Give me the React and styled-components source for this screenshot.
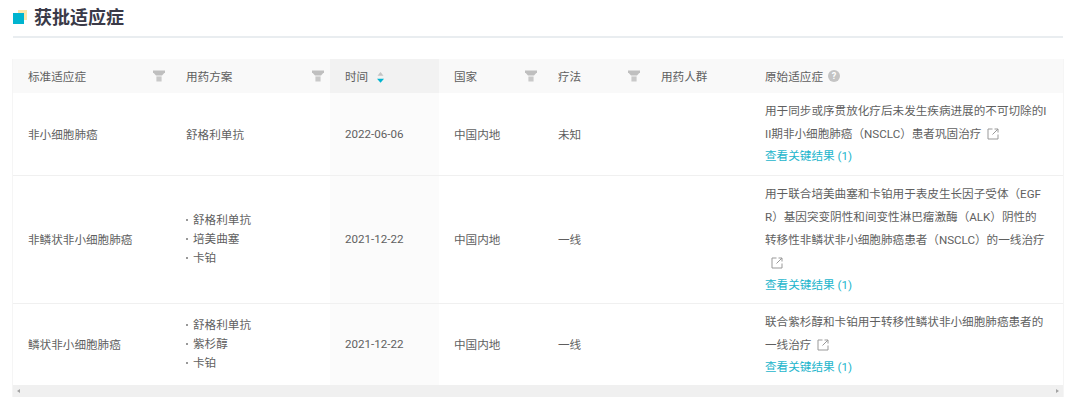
import styled, { createGlobalStyle } from "styled-components";

const columns = [
  { key: "standard", label: "标准适应症", width: 158, filter: true },
  { key: "plan", label: "用药方案", width: 159, filter: true },
  { key: "date", label: "时间", width: 109, sorted: true },
  { key: "country", label: "国家", width: 104, filter: true },
  { key: "therapy", label: "疗法", width: 103, filter: true },
  { key: "people", label: "用药人群", width: 104 },
  { key: "origin", label: "原始适应症", width: 313, help: true },
];

const rows = [
  {
    standard: "非小细胞肺癌",
    plan: ["舒格利单抗"],
    date: "2022-06-06",
    country: "中国内地",
    therapy: "未知",
    origin: "用于同步或序贯放化疗后未发生疾病进展的不可切除的III期非小细胞肺癌（NSCLC）患者巩固治疗",
    height: 82,
  },
  {
    standard: "非鳞状非小细胞肺癌",
    plan: ["舒格利单抗", "培美曲塞", "卡铂"],
    date: "2021-12-22",
    country: "中国内地",
    therapy: "一线",
    origin: "用于联合培美曲塞和卡铂用于表皮生长因子受体（EGFR）基因突变阴性和间变性淋巴瘤激酶（ALK）阴性的转移性非鳞状非小细胞肺癌患者（NSCLC）的一线治疗",
    height: 128,
  },
  {
    standard: "鳞状非小细胞肺癌",
    plan: ["舒格利单抗", "紫杉醇", "卡铂"],
    date: "2021-12-22",
    country: "中国内地",
    therapy: "一线",
    origin: "联合紫杉醇和卡铂用于转移性鳞状非小细胞肺癌患者的一线治疗",
    height: 82,
  },
];

const FilterIcon = () => (
  <FilterSvg viewBox="0 0 12 12" aria-hidden="true">
    <path d="M0 0.5h12v1.8l-3 3.2h-6l-3-3.2z" fill="#bfbfbf" />
    <path d="M3.4 6.4h5.2v5.1h-5.2z" fill="#c9c9c9" />
  </FilterSvg>
);

const SortIcon = () => (
  <SortSvg viewBox="0 0 7 11" aria-hidden="true">
    <path d="M3.5 0l3 3.8h-6z" fill="#c4c4c4" />
    <path d="M0 6.8h7l-3.5 4z" fill="#00b4cf" />
  </SortSvg>
);

const LinkIcon = () => (
  <LinkSvg viewBox="0 0 12 12" aria-hidden="true">
    <path d="M5.5 1h-4.5v10h10v-4.5" />
    <path d="M7.5 1h3.5v3.5M11 1l-5.5 5.5" />
  </LinkSvg>
);

const App = () => (
  <Page>
    <GlobalStyle />
    <TitleBar>
      <TitleIcon viewBox="0 0 14 14" aria-hidden="true">
        <rect x="5" y="0" width="9" height="10" fill="#fde6aa" />
        <rect x="0" y="3" width="11" height="11" fill="#00b4cf" />
      </TitleIcon>
      <Title>获批适应症</Title>
    </TitleBar>

    <TableWrap>
      <Table>
        <colgroup>
          {columns.map((col) => (
            <col key={col.key} width={col.width} />
          ))}
        </colgroup>
        <thead>
          <tr>
            {columns.map((col) => (
              <HeadCell key={col.key} $sorted={col.sorted}>
                <HeadInner>
                  <span>{col.label}</span>
                  {col.sorted && <SortIcon />}
                  {col.help && <HelpMark>?</HelpMark>}
                  {col.filter && <FilterIcon />}
                </HeadInner>
              </HeadCell>
            ))}
          </tr>
        </thead>
        <tbody>
          {rows.map((row) => (
            <BodyRow key={row.standard} $height={row.height}>
              <Cell>{row.standard}</Cell>
              <Cell>
                {row.plan.length === 1 ? (
                  row.plan[0]
                ) : (
                  <DrugList>
                    {row.plan.map((drug) => (
                      <li key={drug}>{drug}</li>
                    ))}
                  </DrugList>
                )}
              </Cell>
              <Cell $sorted>{row.date}</Cell>
              <Cell>{row.country}</Cell>
              <Cell>{row.therapy}</Cell>
              <Cell />
              <OriginCell>
                <OriginText>
                  {row.origin}
                  <LinkIcon />
                </OriginText>
                <ResultLink>查看关键结果 (1)</ResultLink>
              </OriginCell>
            </BodyRow>
          ))}
        </tbody>
      </Table>
      <ScrollBar>
        <ArrowLeft />
        <ArrowRight />
      </ScrollBar>
    </TableWrap>
  </Page>
);

export default App;

// Styled Components
const GlobalStyle = createGlobalStyle`
  body {
    margin: 0;
    background: #fff;
    font-family: Roboto, "Noto Sans CJK SC", sans-serif;
  }
`;

const Page = styled.div`
  width: 1080px;
  height: 405px;
  padding: 0 17px 0 13px;
  box-sizing: border-box;
  overflow: hidden;
`;

const TitleBar = styled.div`
  display: flex;
  align-items: center;
  gap: 7px;
  height: 36px;
  border-bottom: 2px solid #e9edf0;
`;

const TitleIcon = styled.svg`
  width: 14px;
  height: 14px;
  margin-top: -2px;
`;

const Title = styled.h2`
  margin: 0;
  font-size: 18px;
  font-weight: 700;
  line-height: 36px;
  color: #3a3a48;
`;

const TableWrap = styled.div`
  margin-top: 21px;
  width: 1050px;
  box-shadow: -1px 0 #f5f5f5, 1px 0 #f5f5f5;
`;

const Table = styled.table`
  width: 1050px;
  table-layout: fixed;
  border-collapse: collapse;
  font-size: 11.6px;
  color: #5f5f5f;
`;

const BodyRow = styled.tr`
  height: ${(props) => props.$height}px;
`;

const HeadCell = styled.th`
  height: 34px;
  padding: 0 6px 0 15px;
  font-weight: 400;
  text-align: left;
  background: ${(props) => (props.$sorted ? "#f2f2f2" : "#f9f9f9")};
`;

const HeadInner = styled.div`
  display: flex;
  align-items: center;
  gap: 5px;
`;

const FilterSvg = styled.svg`
  width: 12px;
  height: 12px;
  margin-left: auto;
`;

const SortSvg = styled.svg`
  width: 7px;
  height: 11px;
  margin-left: 4px;
  margin-top: 2px;
`;

const HelpMark = styled.span`
  display: inline-flex;
  align-items: center;
  justify-content: center;
  width: 12px;
  height: 12px;
  border-radius: 50%;
  background: #c4c4c4;
  color: #fff;
  font-size: 9px;
  font-weight: 700;
`;

const Cell = styled.td`
  padding: 0 15px;
  border-bottom: 1px solid #f0f0f0;
  vertical-align: middle;
  background: ${(props) => (props.$sorted ? "#fbfbfb" : "#fff")};
`;

const DrugList = styled.ul`
  margin: 0;
  padding: 0;
  list-style: none;
  line-height: 19px;

  li {
    display: flex;
    align-items: center;
    gap: 5px;
  }

  li::before {
    content: "";
    width: 2px;
    height: 2px;
    border-radius: 50%;
    background: #777;
  }
`;

const OriginCell = styled(Cell)`
  padding: 0 16px 0 15px;
`;

const OriginText = styled.div`
  line-height: 23px;
  word-break: break-all;
`;

const LinkSvg = styled.svg`
  display: inline-block;
  width: 12px;
  height: 12px;
  margin-left: 6px;
  vertical-align: -2px;
  fill: none;
  stroke: #999;
  stroke-width: 1;
`;

const ResultLink = styled.a`
  display: block;
  line-height: 21px;
  color: #1cb5cc;
  cursor: pointer;
`;

const ScrollBar = styled.div`
  display: flex;
  align-items: center;
  justify-content: space-between;
  height: 11px;
  padding: 0 4px;
  background: #f0f0f0;
`;

const ArrowLeft = styled.span`
  border-top: 2px solid transparent;
  border-bottom: 2px solid transparent;
  border-right: 3px solid #a3a3a3;
`;

const ArrowRight = styled.span`
  border-top: 2px solid transparent;
  border-bottom: 2px solid transparent;
  border-left: 3px solid #a3a3a3;
`;
